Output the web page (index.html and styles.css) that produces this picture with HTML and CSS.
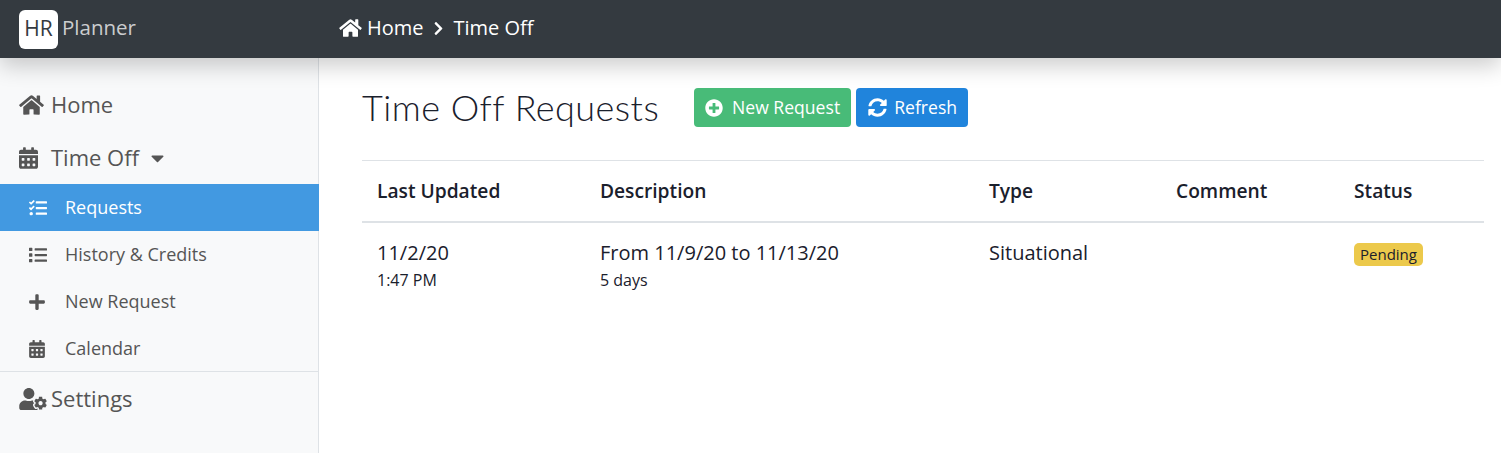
FILE: index.html
```html
<!DOCTYPE html>
<html>
  <head>
    <title>HR Planner</title>
    <link rel="stylesheet" href="styles.css">
  </head>

  <body>
    <svg class="defs" xmlns="http://www.w3.org/2000/svg">
      <symbol id="i-home" viewBox="0 0 576 512"><path d="M280.37 148.26L96 300.11V464a16 16 0 0 0 16 16l112.06-.29a16 16 0 0 0 15.92-16V368a16 16 0 0 1 16-16h64a16 16 0 0 1 16 16v95.64a16 16 0 0 0 16 16.05L464 480a16 16 0 0 0 16-16V300L295.67 148.26a12.19 12.19 0 0 0-15.3 0zM571.6 251.47L488 182.56V44.05a12 12 0 0 0-12-12h-56a12 12 0 0 0-12 12v72.61L318.47 43a48 48 0 0 0-61 0L4.34 251.47a12 12 0 0 0-1.6 16.9l25.5 31A12 12 0 0 0 45.15 301l235.22-193.74a12.19 12.19 0 0 1 15.3 0L530.9 301a12 12 0 0 0 16.9-1.6l25.5-31a12 12 0 0 0-1.7-16.93z"/></symbol>
      <symbol id="i-calendar" viewBox="0 0 448 512"><path d="M0 464c0 26.5 21.5 48 48 48h352c26.5 0 48-21.5 48-48V192H0v272zm320-196c0-6.6 5.4-12 12-12h40c6.6 0 12 5.4 12 12v40c0 6.6-5.4 12-12 12h-40c-6.6 0-12-5.4-12-12v-40zm0 128c0-6.6 5.4-12 12-12h40c6.6 0 12 5.4 12 12v40c0 6.6-5.4 12-12 12h-40c-6.6 0-12-5.4-12-12v-40zM192 268c0-6.6 5.4-12 12-12h40c6.6 0 12 5.4 12 12v40c0 6.6-5.4 12-12 12h-40c-6.6 0-12-5.4-12-12v-40zm0 128c0-6.6 5.4-12 12-12h40c6.6 0 12 5.4 12 12v40c0 6.6-5.4 12-12 12h-40c-6.6 0-12-5.4-12-12v-40zM64 268c0-6.6 5.4-12 12-12h40c6.6 0 12 5.4 12 12v40c0 6.6-5.4 12-12 12H76c-6.6 0-12-5.4-12-12v-40zm0 128c0-6.6 5.4-12 12-12h40c6.6 0 12 5.4 12 12v40c0 6.6-5.4 12-12 12H76c-6.6 0-12-5.4-12-12v-40zM400 64h-48V16c0-8.8-7.2-16-16-16h-32c-8.8 0-16 7.2-16 16v48H160V16c0-8.8-7.2-16-16-16h-32c-8.8 0-16 7.2-16 16v48H48C21.5 64 0 85.5 0 112v48h448v-48c0-26.5-21.5-48-48-48z"/></symbol>
      <symbol id="i-caret" viewBox="0 0 320 512"><path d="M31.3 192h257.3c17.8 0 26.7 21.5 14.1 34.1L174.1 354.8c-7.8 7.8-20.5 7.8-28.3 0L17.2 226.1C4.6 213.5 13.5 192 31.3 192z"/></symbol>
      <symbol id="i-tasks" viewBox="0 0 512 512"><path d="M139.61 35.5a12 12 0 0 0-17 0L58.93 98.81l-22.7-22.12a12 12 0 0 0-17 0L3.53 92.41a12 12 0 0 0 0 17l47.59 47.4a12.78 12.78 0 0 0 17.61 0l15.59-15.62L156.52 69a12.09 12.09 0 0 0 .09-17zm0 159.19a12 12 0 0 0-17 0l-63.68 63.72-22.7-22.1a12 12 0 0 0-17 0L3.53 252a12 12 0 0 0 0 17L51 316.5a12.77 12.77 0 0 0 17.6 0l15.7-15.69 72.2-72.22a12 12 0 0 0 .09-16.9zM64 368c-26.49 0-48.59 21.5-48.59 48S37.53 464 64 464a48 48 0 0 0 0-96zm432 16H208a16 16 0 0 0-16 16v32a16 16 0 0 0 16 16h288a16 16 0 0 0 16-16v-32a16 16 0 0 0-16-16zm0-320H208a16 16 0 0 0-16 16v32a16 16 0 0 0 16 16h288a16 16 0 0 0 16-16V80a16 16 0 0 0-16-16zm0 160H208a16 16 0 0 0-16 16v32a16 16 0 0 0 16 16h288a16 16 0 0 0 16-16v-32a16 16 0 0 0-16-16z"/></symbol>
      <symbol id="i-list" viewBox="0 0 512 512"><path d="M80 368H16a16 16 0 0 0-16 16v64a16 16 0 0 0 16 16h64a16 16 0 0 0 16-16v-64a16 16 0 0 0-16-16zm0-320H16A16 16 0 0 0 0 64v64a16 16 0 0 0 16 16h64a16 16 0 0 0 16-16V64a16 16 0 0 0-16-16zm0 160H16a16 16 0 0 0-16 16v64a16 16 0 0 0 16 16h64a16 16 0 0 0 16-16v-64a16 16 0 0 0-16-16zm416 176H176a16 16 0 0 0-16 16v32a16 16 0 0 0 16 16h320a16 16 0 0 0 16-16v-32a16 16 0 0 0-16-16zm0-320H176a16 16 0 0 0-16 16v32a16 16 0 0 0 16 16h320a16 16 0 0 0 16-16V80a16 16 0 0 0-16-16zm0 160H176a16 16 0 0 0-16 16v32a16 16 0 0 0 16 16h320a16 16 0 0 0 16-16v-32a16 16 0 0 0-16-16z"/></symbol>
      <symbol id="i-plus" viewBox="0 0 448 512"><path d="M416 208H272V64c0-17.67-14.33-32-32-32h-32c-17.67 0-32 14.33-32 32v144H32c-17.67 0-32 14.33-32 32v32c0 17.67 14.33 32 32 32h144v144c0 17.67 14.33 32 32 32h32c17.67 0 32-14.33 32-32V304h144c17.67 0 32-14.33 32-32v-32c0-17.67-14.33-32-32-32z"/></symbol>
      <symbol id="i-plus-circle" viewBox="0 0 512 512"><path d="M256 8C119 8 8 119 8 256s111 248 248 248 248-111 248-248S393 8 256 8zm144 276c0 6.6-5.4 12-12 12h-92v92c0 6.6-5.4 12-12 12h-56c-6.6 0-12-5.4-12-12v-92h-92c-6.6 0-12-5.4-12-12v-56c0-6.6 5.4-12 12-12h92v-92c0-6.6 5.4-12 12-12h56c6.6 0 12 5.4 12 12v92h92c6.6 0 12 5.4 12 12v56z"/></symbol>
      <symbol id="i-sync" viewBox="0 0 512 512"><path d="M370.72 133.28C339.458 104.008 298.888 87.962 255.848 88c-77.458.068-144.328 53.178-162.791 126.85-1.344 5.363-6.122 9.15-11.651 9.15H24.103c-7.498 0-13.194-6.807-11.807-14.176C33.933 94.924 134.813 8 256 8c66.448 0 126.791 26.136 171.315 68.685L463.03 40.97C478.149 25.851 504 36.559 504 57.941V192c0 13.255-10.745 24-24 24H345.941c-21.382 0-32.09-25.851-16.971-40.971l41.75-41.749zM32 296h134.059c21.382 0 32.09 25.851 16.971 40.971l-41.75 41.75c31.262 29.273 71.835 45.319 114.876 45.28 77.418-.07 144.315-53.144 162.787-126.849 1.344-5.363 6.122-9.15 11.651-9.15h57.304c7.498 0 13.194 6.807 11.807 14.176C478.067 417.076 377.187 504 256 504c-66.448 0-126.791-26.136-171.315-68.685L48.97 471.03C33.851 486.149 8 475.441 8 454.059V320c0-13.255 10.745-24 24-24z"/></symbol>
      <symbol id="i-chevron" viewBox="0 0 320 512"><path d="M285.476 272.971L91.132 467.314c-9.373 9.373-24.569 9.373-33.941 0l-22.667-22.667c-9.357-9.357-9.375-24.522-.04-33.901L188.505 256 34.484 101.255c-9.335-9.379-9.317-24.544.04-33.901l22.667-22.667c9.373-9.373 24.569-9.373 33.941 0L285.475 239.03c9.373 9.372 9.373 24.568.001 33.941z"/></symbol>
      <symbol id="i-user-cog" viewBox="0 0 640 512"><path d="M610.5 373.3c2.6-14.1 2.6-28.5 0-42.6l25.8-14.9c3-1.7 4.3-5.2 3.3-8.5-6.7-21.6-18.2-41.2-33.2-57.4-2.3-2.5-6-3.1-9-1.4l-25.8 14.9c-10.9-9.3-23.4-16.5-36.9-21.3v-29.8c0-3.4-2.4-6.4-5.7-7.1-22.3-5-45-4.8-66.2 0-3.3.7-5.7 3.7-5.7 7.1v29.8c-13.5 4.8-26 12-36.9 21.3l-25.8-14.9c-2.9-1.7-6.7-1.1-9 1.4-15 16.2-26.5 35.8-33.2 57.4-1 3.3.4 6.8 3.3 8.5l25.8 14.9c-2.6 14.1-2.6 28.5 0 42.6l-25.8 14.9c-3 1.7-4.3 5.2-3.3 8.5 6.7 21.6 18.2 41.1 33.2 57.4 2.3 2.5 6 3.1 9 1.4l25.8-14.9c10.9 9.3 23.4 16.5 36.9 21.3v29.8c0 3.4 2.4 6.4 5.7 7.1 22.3 5 45 4.8 66.2 0 3.3-.7 5.7-3.7 5.7-7.1v-29.8c13.5-4.8 26-12 36.9-21.3l25.8 14.9c2.9 1.7 6.7 1.1 9-1.4 15-16.2 26.5-35.8 33.2-57.4 1-3.3-.4-6.8-3.3-8.5l-25.8-14.9zM496 400.5c-26.8 0-48.5-21.8-48.5-48.5s21.8-48.5 48.5-48.5 48.5 21.8 48.5 48.5-21.7 48.5-48.5 48.5zM224 256c70.7 0 128-57.3 128-128S294.7 0 224 0 96 57.3 96 128s57.3 128 128 128zm201.2 226.5c-2.3-1.2-4.6-2.6-6.8-3.9l-7.9 4.6c-6 3.4-12.8 5.3-19.6 5.3-10.9 0-21.4-4.6-28.9-12.6-18.3-19.8-32.3-43.9-40.2-69.6-5.5-17.7 1.9-36.4 17.9-45.7l7.9-4.6c-.1-2.6-.1-5.2 0-7.8l-7.9-4.6c-16-9.2-23.4-28-17.9-45.7.9-2.9 2.2-5.8 3.2-8.7-3.8-.3-7.5-1.2-11.4-1.2h-16.7c-22.2 10.2-46.9 16-72.9 16s-50.6-5.8-72.9-16h-16.7C60.2 288 0 348.2 0 422.4V464c0 26.5 21.5 48 48 48h352c10.1 0 19.5-3.2 27.2-8.5-1.2-3.8-2-7.7-2-11.8v-9.2z"/></symbol>
    </svg>

    <header class="topbar">
      <a class="brand">
        <span class="brand-mark">HR</span>
        <span class="brand-name">Planner</span>
      </a>
      <nav class="crumbs">
        <svg class="crumb-home"><use href="#i-home"/></svg>
        <span>Home</span>
        <svg class="crumb-sep"><use href="#i-chevron"/></svg>
        <span>Time Off</span>
      </nav>
    </header>

    <div class="layout">
      <aside class="sidebar">
        <a class="nav-top nav-home">
          <svg class="icon-home"><use href="#i-home"/></svg>
          <span>Home</span>
        </a>
        <a class="nav-top nav-timeoff">
          <svg class="icon-cal"><use href="#i-calendar"/></svg>
          <span>Time Off</span>
          <svg class="icon-caret"><use href="#i-caret"/></svg>
        </a>
        <ul class="subnav">
          <li class="subnav-item active">
            <svg><use href="#i-tasks"/></svg>
            <span>Requests</span>
          </li>
          <li class="subnav-item">
            <svg><use href="#i-list"/></svg>
            <span>History &amp; Credits</span>
          </li>
          <li class="subnav-item">
            <svg class="icon-narrow"><use href="#i-plus"/></svg>
            <span>New Request</span>
          </li>
          <li class="subnav-item">
            <svg class="icon-narrow"><use href="#i-calendar"/></svg>
            <span>Calendar</span>
          </li>
        </ul>
        <a class="nav-top nav-settings">
          <svg class="icon-cog"><use href="#i-user-cog"/></svg>
          <span>Settings</span>
        </a>
      </aside>

      <main class="content">
        <div class="page-head">
          <h1>Time Off Requests</h1>
          <button class="btn btn-green">
            <svg><use href="#i-plus-circle"/></svg>
            <span>New Request</span>
          </button>
          <button class="btn btn-blue">
            <svg><use href="#i-sync"/></svg>
            <span>Refresh</span>
          </button>
        </div>

        <table class="requests">
          <thead>
            <tr>
              <th class="col-updated">Last Updated</th>
              <th class="col-desc">Description</th>
              <th class="col-type">Type</th>
              <th class="col-comment">Comment</th>
              <th>Status</th>
            </tr>
          </thead>
          <tbody>
            <tr>
              <td>11/2/20<small>1:47 PM</small></td>
              <td>From 11/9/20 to 11/13/20<small>5 days</small></td>
              <td>Situational</td>
              <td></td>
              <td><span class="badge">Pending</span></td>
            </tr>
          </tbody>
        </table>
      </main>
    </div>
  </body>
</html>
```

FILE: styles.css
```css
* {
  box-sizing: border-box;
}

html,
body {
  height: 100%;
}

body {
  margin: 0;
  overflow: hidden;
  font-family: "Open Sans", sans-serif;
  color: #1a202c;
  background: #fff;
  display: flex;
  flex-direction: column;
}

svg {
  fill: currentColor;
  display: block;
  flex: none;
}

.defs {
  display: none;
}

/* top bar */
.topbar {
  height: 58px;
  flex: none;
  display: flex;
  align-items: center;
  background: #343a40;
  color: #fff;
  box-shadow: 0 8px 22px rgba(0, 0, 0, 0.2);
  position: relative;
  z-index: 2;
}

.brand {
  width: 339px;
  padding-left: 19px;
  display: flex;
  align-items: center;
  gap: 4px;
}

.brand-mark {
  width: 39px;
  height: 39px;
  border-radius: 6px;
  background: #fff;
  color: #343a40;
  font-size: 21px;
  line-height: 36px;
  text-align: center;
}

.brand-name {
  font-size: 20.5px;
  line-height: 24px;
  margin-top: -4px;
  color: rgba(255, 255, 255, 0.75);
}

.crumbs {
  display: flex;
  align-items: center;
  font-size: 20px;
}

.crumbs span {
  margin-top: -4px;
}

.crumb-home {
  width: 23px;
  height: 20px;
  margin-right: 5px;
  margin-top: -2px;
}

.crumb-sep {
  width: 13px;
  height: 15px;
  margin: -2px 9px 0 8px;
}

/* sidebar */
.layout {
  flex: 1;
  display: flex;
  min-height: 0;
}

.sidebar {
  width: 319px;
  flex: none;
  padding-top: 31px;
  background: #f8f9fa;
  border-right: 1px solid #dee2e6;
  color: #555;
}

.nav-top {
  height: 32px;
  display: flex;
  align-items: center;
  padding-left: 19px;
  font-size: 22px;
  line-height: 32px;
}

.nav-top span {
  margin-top: -2px;
}

.nav-timeoff {
  margin-top: 21px;
  margin-bottom: 10px;
}

.icon-home {
  width: 25px;
  height: 22px;
  margin-right: 7px;
}

.icon-cal {
  width: 19px;
  height: 22px;
  margin-right: 13px;
}

.icon-caret {
  width: 13px;
  height: 22px;
  margin-left: 12px;
}

.icon-cog {
  width: 28px;
  height: 22px;
  margin-right: 4px;
}

.nav-settings {
  margin-top: 11px;
}

.subnav {
  list-style: none;
  margin: 0 -1px 0 0;
  padding: 0;
  height: 188px;
  border-bottom: 1px solid #dee2e6;
}

.subnav-item {
  height: 47px;
  display: flex;
  align-items: center;
  padding-left: 29px;
  font-size: 18px;
}

.subnav-item span {
  margin-top: -2px;
}

.subnav-item svg {
  width: 18px;
  height: 18px;
  margin-right: 18px;
}

.subnav-item .icon-narrow {
  width: 16px;
  margin-right: 20px;
}

.subnav-item.active {
  background: #4299e1;
  color: #fff;
}

/* main */
.content {
  flex: 1;
  min-width: 0;
  padding: 30px 17px 0 43px;
}

.page-head {
  display: flex;
  align-items: center;
  height: 39px;
  margin-bottom: 33px;
}

.page-head h1 {
  margin: -2px 35px 0 0;
  width: 297px;
  font-family: Lato, sans-serif;
  font-weight: 300;
  font-size: 36px;
  letter-spacing: 0.47px;
  line-height: 42px;
  white-space: nowrap;
}

.btn {
  height: 39px;
  display: flex;
  align-items: center;
  gap: 9px;
  padding: 0 11px;
  margin-right: 5px;
  border: 0;
  border-radius: 4px;
  color: #fff;
  font-family: inherit;
  font-size: 17.6px;
}

.btn span {
  margin-top: -2px;
}

.btn svg {
  width: 18px;
  height: 18px;
}

.btn-green {
  background: #48bb78;
}

.btn-blue {
  background: #2084dc;
  gap: 7px;
  padding: 0 11px 0 12px;
}

.btn-blue svg {
  width: 19px;
  height: 19px;
}

.requests {
  width: 100%;
  border-collapse: collapse;
  table-layout: fixed;
  font-size: 20px;
}

.requests th {
  height: 61px;
  padding: 0 15px 1px;
  text-align: left;
  font-size: 19.2px;
  font-weight: 600;
  border-top: 1px solid #dee2e6;
  border-bottom: 2px solid #dee2e6;
}

.requests td {
  padding: 16px 15px;
  vertical-align: top;
  line-height: 27px;
}

.requests small {
  display: block;
  margin-top: 1px;
  font-size: 16px;
  line-height: 27px;
}

.col-updated {
  width: 223px;
}

.col-desc {
  width: 389px;
}

.col-type {
  width: 187px;
}

.col-comment {
  width: 178px;
}

.badge {
  display: inline-block;
  margin-top: 4px;
  padding: 0 6px;
  border-radius: 5px;
  background: #ecc94b;
  font-size: 15px;
  line-height: 23px;
  vertical-align: top;
}
```
